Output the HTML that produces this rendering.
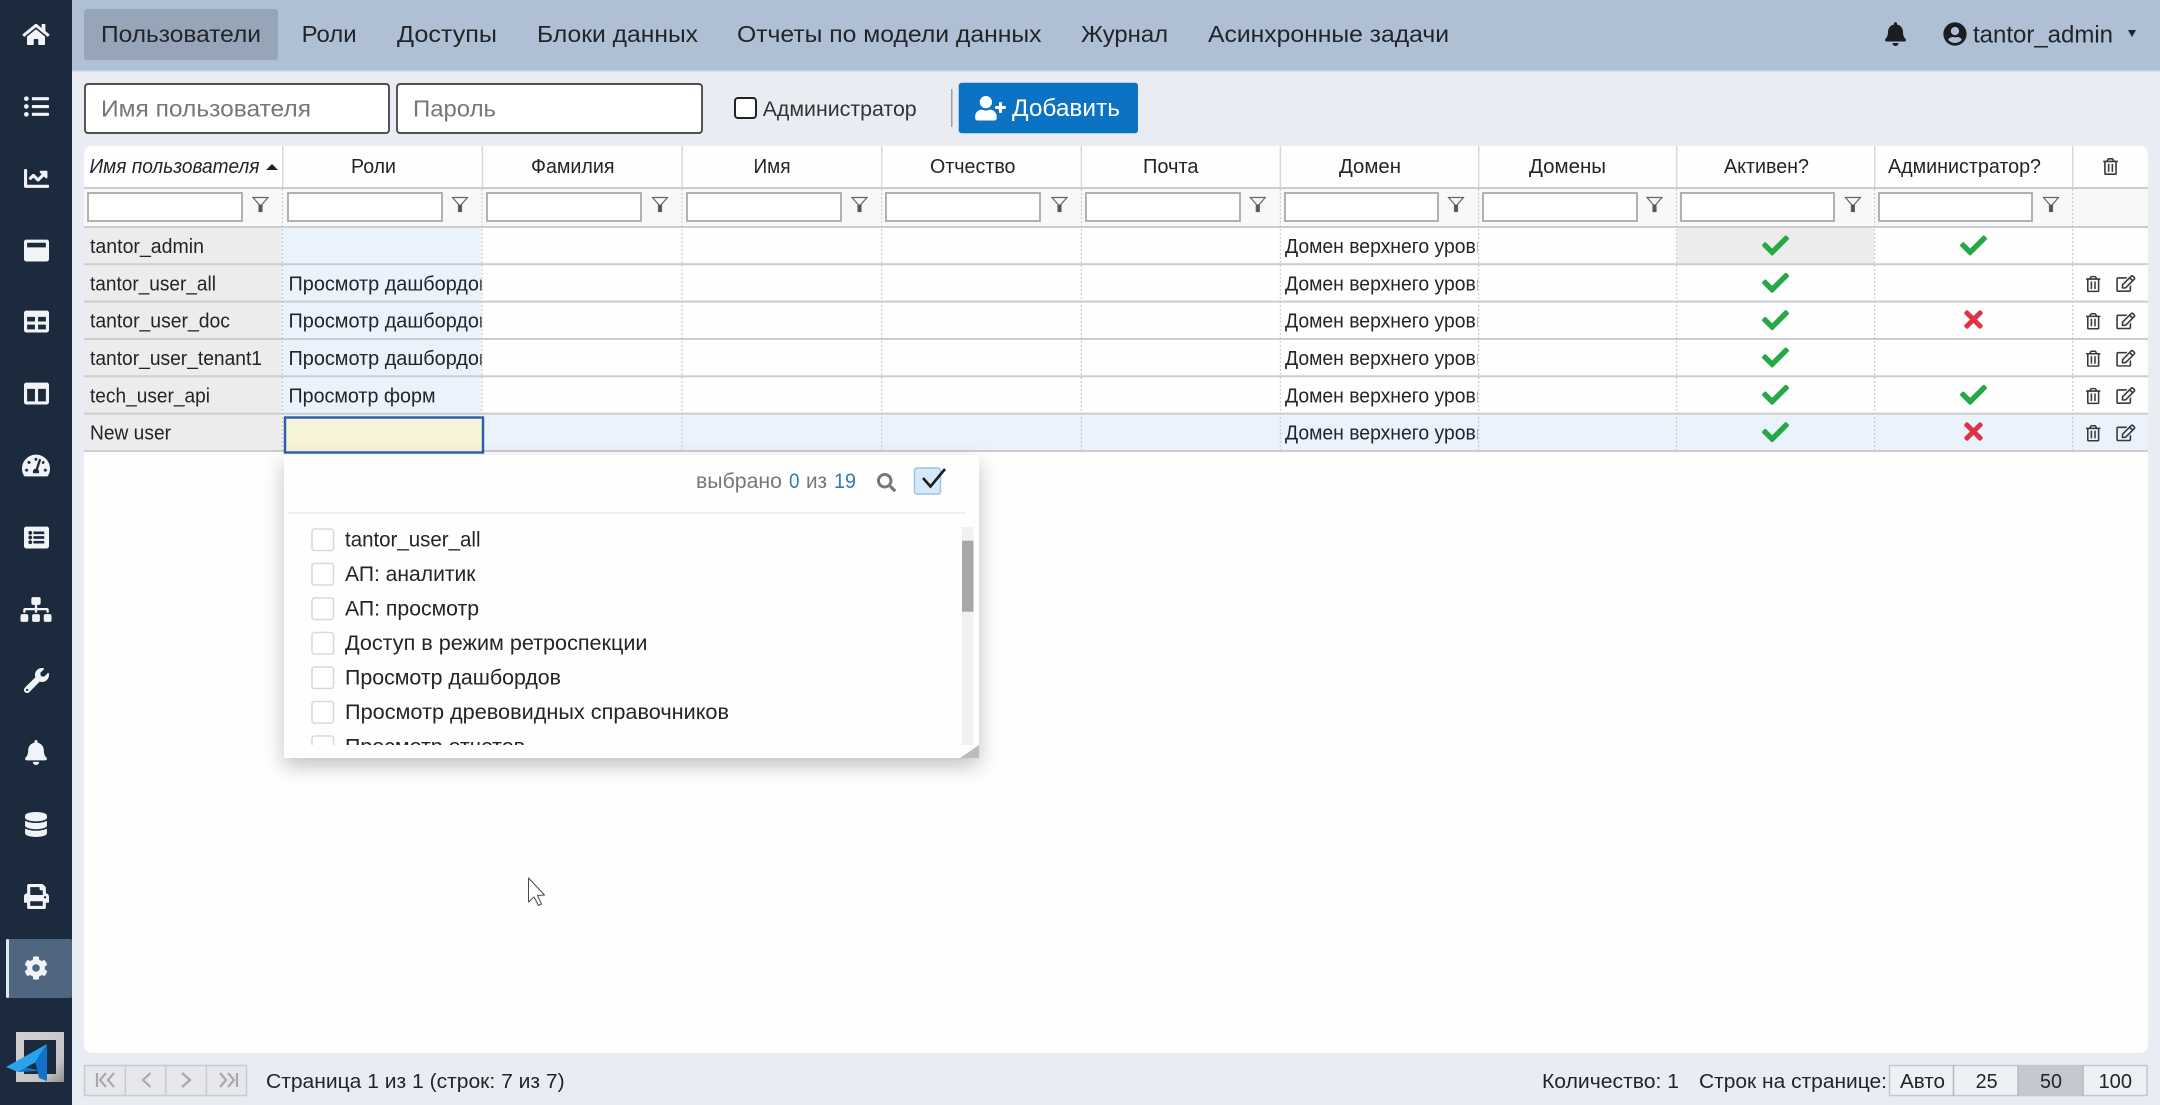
<!DOCTYPE html>
<html lang="ru">
<head>
<meta charset="utf-8">
<title>Пользователи</title>
<style>
html,body{margin:0;padding:0;width:2160px;height:1105px;overflow:hidden;background:#e9edf3}
svg{display:block;font-family:"Liberation Sans","Noto Sans CJK SC",sans-serif;filter:blur(.35px)}
text{fill:#212529;font-size:20px}
.nav{font-size:23.5px}
.ph{font-size:23px;fill:#777}
.dd text{font-size:21px}
.grey{fill:#777}
.blue{fill:#337ab7}
</style>
</head>
<body>
<svg width="2160" height="1105" viewBox="0 0 2160 1105" xmlns="http://www.w3.org/2000/svg">
<defs>
<symbol id="i-home" viewBox="0 0 576 512"><path d="M280.37 148.26L96 300.11V464a16 16 0 0 0 16 16l112.06-.29a16 16 0 0 0 15.92-16V368a16 16 0 0 1 16-16h64a16 16 0 0 1 16 16v95.64a16 16 0 0 0 16 16.05L464 480a16 16 0 0 0 16-16V300L295.67 148.26a12.19 12.19 0 0 0-15.3 0zM571.6 251.47L488 182.56V44.05a12 12 0 0 0-12-12h-56a12 12 0 0 0-12 12v72.61L318.47 43a48 48 0 0 0-61 0L4.34 251.47a12 12 0 0 0-1.6 16.9l25.5 31A12 12 0 0 0 45.15 301l235.22-193.74a12.19 12.19 0 0 1 15.3 0L530.9 301a12 12 0 0 0 16.9-1.6l25.5-31a12 12 0 0 0-1.7-16.93z"/></symbol>
<symbol id="i-list" viewBox="0 0 512 512"><path d="M48 48a48 48 0 1 0 48 48 48 48 0 0 0-48-48zm0 160a48 48 0 1 0 48 48 48 48 0 0 0-48-48zm0 160a48 48 0 1 0 48 48 48 48 0 0 0-48-48zm448 16H176a16 16 0 0 0-16 16v32a16 16 0 0 0 16 16h320a16 16 0 0 0 16-16v-32a16 16 0 0 0-16-16zm0-320H176a16 16 0 0 0-16 16v32a16 16 0 0 0 16 16h320a16 16 0 0 0 16-16V80a16 16 0 0 0-16-16zm0 160H176a16 16 0 0 0-16 16v32a16 16 0 0 0 16 16h320a16 16 0 0 0 16-16v-32a16 16 0 0 0-16-16z"/></symbol>
<symbol id="i-chart" viewBox="0 0 512 512"><path d="M496 384H64V80c0-8.84-7.16-16-16-16H16C7.16 64 0 71.16 0 80v336c0 17.67 14.33 32 32 32h464c8.84 0 16-7.16 16-16v-32c0-8.84-7.16-16-16-16zM464 96H345.94c-21.38 0-32.09 25.85-16.97 40.97l32.4 32.4L288 242.75l-73.37-73.37c-12.5-12.5-32.76-12.5-45.25 0l-68.69 68.69c-6.25 6.25-6.25 16.38 0 22.63l22.62 22.62c6.25 6.25 16.38 6.25 22.63 0L192 237.25l73.37 73.37c12.5 12.5 32.76 12.5 45.25 0l96-96 32.4 32.4c15.12 15.12 40.97 4.41 40.97-16.97V112c.01-8.84-7.15-16-16.02-16z"/></symbol>
<symbol id="i-win" viewBox="0 0 512 512"><path d="M464 32H48C21.5 32 0 53.5 0 80v352c0 26.5 21.5 48 48 48h416c26.5 0 48-21.5 48-48V80c0-26.5-21.5-48-48-48zm-16 160H64v-84c0-6.6 5.4-12 12-12h360c6.6 0 12 5.4 12 12v84z"/></symbol>
<symbol id="i-table" viewBox="0 0 512 512"><path d="M464 32H48C21.49 32 0 53.49 0 80v352c0 26.51 21.49 48 48 48h416c26.51 0 48-21.49 48-48V80c0-26.51-21.49-48-48-48zM224 416H64v-96h160v96zm0-160H64v-96h160v96zm224 160H288v-96h160v96zm0-160H288v-96h160v96z"/></symbol>
<symbol id="i-cols" viewBox="0 0 512 512"><path d="M464 32H48C21.49 32 0 53.49 0 80v352c0 26.51 21.49 48 48 48h416c26.51 0 48-21.49 48-48V80c0-26.51-21.49-48-48-48zM224 416H64V160h160v256zm224 0H288V160h160v256z"/></symbol>
<symbol id="i-gauge" viewBox="0 0 576 512"><path d="M288 32C128.94 32 0 160.94 0 320c0 52.8 14.25 102.26 39.06 144.8 5.61 9.62 16.3 15.2 27.44 15.2h443c11.14 0 21.83-5.58 27.44-15.2C561.75 422.26 576 372.8 576 320c0-159.06-128.94-288-288-288zm0 64c14.71 0 26.58 10.13 30.32 23.65-1.11 2.26-2.64 4.23-3.45 6.67l-9.22 27.67c-5.13 3.49-10.97 6.01-17.64 6.01-17.67 0-32-14.33-32-32S270.33 96 288 96zM96 384c-17.67 0-32-14.33-32-32s14.33-32 32-32 32 14.33 32 32-14.33 32-32 32zm48-160c-17.67 0-32-14.33-32-32s14.33-32 32-32 32 14.33 32 32-14.33 32-32 32zm246.77-72.41l-61.33 184C343.13 347.33 352 364.54 352 384c0 11.72-3.38 22.55-8.88 32H232.88c-5.5-9.45-8.88-20.28-8.88-32 0-33.94 26.5-61.43 59.9-63.59l61.34-184.01c4.17-12.56 17.73-19.45 30.36-15.17 12.57 4.19 19.35 17.79 15.17 30.36zm14.66 57.2l15.52-46.55c3.47-1.29 7.13-2.23 11.05-2.23 17.67 0 32 14.33 32 32s-14.33 32-32 32c-11.38-.01-20.89-6.28-26.57-15.22zM480 384c-17.67 0-32-14.33-32-32s14.33-32 32-32 32 14.33 32 32-14.33 32-32 32z"/></symbol>
<symbol id="i-listalt" viewBox="0 0 512 512"><path d="M464 480H48c-26.51 0-48-21.49-48-48V80c0-26.51 21.49-48 48-48h416c26.51 0 48 21.49 48 48v352c0 26.51-21.49 48-48 48zM128 120c-22.091 0-40 17.909-40 40s17.909 40 40 40 40-17.909 40-40-17.909-40-40-40zm0 96c-22.091 0-40 17.909-40 40s17.909 40 40 40 40-17.909 40-40-17.909-40-40-40zm0 96c-22.091 0-40 17.909-40 40s17.909 40 40 40 40-17.909 40-40-17.909-40-40-40zm288-136v-32c0-6.627-5.373-12-12-12H204c-6.627 0-12 5.373-12 12v32c0 6.627 5.373 12 12 12h200c6.627 0 12-5.373 12-12zm0 96v-32c0-6.627-5.373-12-12-12H204c-6.627 0-12 5.373-12 12v32c0 6.627 5.373 12 12 12h200c6.627 0 12-5.373 12-12zm0 96v-32c0-6.627-5.373-12-12-12H204c-6.627 0-12 5.373-12 12v32c0 6.627 5.373 12 12 12h200c6.627 0 12-5.373 12-12z"/></symbol>
<symbol id="i-site" viewBox="0 0 640 512"><path d="M128 352H32c-17.67 0-32 14.33-32 32v96c0 17.67 14.33 32 32 32h96c17.67 0 32-14.33 32-32v-96c0-17.67-14.33-32-32-32zm-24-80h192v48h48v-48h192v48h48v-57.59c0-21.17-17.23-38.41-38.41-38.41H344v-64h40c17.67 0 32-14.33 32-32V32c0-17.67-14.33-32-32-32H256c-17.67 0-32 14.33-32 32v96c0 17.67 14.33 32 32 32h40v64H94.41C73.23 224 56 241.23 56 262.41V320h48v-48zm264 80h-96c-17.67 0-32 14.33-32 32v96c0 17.67 14.33 32 32 32h96c17.67 0 32-14.33 32-32v-96c0-17.67-14.33-32-32-32zm240 0h-96c-17.67 0-32 14.33-32 32v96c0 17.67 14.33 32 32 32h96c17.67 0 32-14.33 32-32v-96c0-17.67-14.33-32-32-32z"/></symbol>
<symbol id="i-wrench" viewBox="0 0 512 512"><path d="M507.73 109.1c-2.24-9.03-13.54-12.09-20.12-5.51l-74.36 74.36-67.88-11.31-11.31-67.88 74.36-74.36c6.62-6.62 3.43-17.9-5.66-20.16-47.38-11.74-99.55.91-136.58 37.93-39.64 39.64-50.55 97.1-34.05 147.2L18.74 402.76c-24.99 24.99-24.99 65.51 0 90.5 24.99 24.99 65.51 24.99 90.5 0l213.21-213.21c50.12 16.71 107.47 5.68 147.37-34.22 37.07-37.07 49.7-89.32 37.91-136.73zM64 472c-13.25 0-24-10.75-24-24 0-13.26 10.75-24 24-24s24 10.74 24 24c0 13.25-10.75 24-24 24z"/></symbol>
<symbol id="i-bell" viewBox="0 0 448 512"><path d="M224 512c35.32 0 63.97-28.65 63.97-64H160.03c0 35.35 28.65 64 63.97 64zm215.39-149.71c-19.32-20.76-55.47-51.99-55.47-154.29 0-77.7-54.48-139.9-127.94-155.16V32c0-17.67-14.32-32-31.98-32s-31.98 14.33-31.98 32v20.84C118.56 68.1 64.08 130.3 64.08 208c0 102.3-36.15 133.53-55.47 154.29-6 6.45-8.66 14.16-8.61 21.71.11 16.4 12.98 32 32.1 32h383.8c19.12 0 32-15.6 32.1-32 .05-7.55-2.61-15.27-8.61-21.71z"/></symbol>
<symbol id="i-db" viewBox="0 0 448 512"><path d="M448 73.143v45.714C448 159.143 347.667 192 224 192S0 159.143 0 118.857V73.143C0 32.857 100.333 0 224 0s224 32.857 224 73.143zM448 176v102.857C448 319.143 347.667 352 224 352S0 319.143 0 278.857V176c48.125 33.143 136.208 48.572 224 48.572S399.874 209.143 448 176zm0 160v102.857C448 479.143 347.667 512 224 512S0 479.143 0 438.857V336c48.125 33.143 136.208 48.572 224 48.572S399.874 369.143 448 336z"/></symbol>
<symbol id="i-print" viewBox="0 0 512 512"><path d="M448 192V77.25c0-8.49-3.37-16.62-9.37-22.63L393.37 9.37c-6-6-14.14-9.37-22.63-9.37H96C78.33 0 64 14.33 64 32v160c-35.35 0-64 28.65-64 64v112c0 8.84 7.16 16 16 16h48v96c0 17.67 14.33 32 32 32h320c17.67 0 32-14.33 32-32v-96h48c8.84 0 16-7.16 16-16V256c0-35.35-28.65-64-64-64zm-64 256H128v-96h256v96zm0-224H128V64h192v48c0 8.84 7.16 16 16 16h48v96zm48 72c-13.25 0-24-10.75-24-24 0-13.26 10.75-24 24-24s24 10.74 24 24c0 13.25-10.75 24-24 24z"/></symbol>
<symbol id="i-cog" viewBox="0 0 512 512"><path d="M487.4 315.7l-42.6-24.6c4.3-23.2 4.3-47 0-70.2l42.6-24.6c4.9-2.8 7.1-8.6 5.5-14-11.1-35.6-30-67.8-54.7-94.6-3.8-4.1-10-5.1-14.8-2.3L380.8 110c-17.9-15.4-38.5-27.3-60.8-35.1V25.8c0-5.6-3.9-10.5-9.4-11.7-36.7-8.2-74.3-7.8-109.2 0-5.5 1.2-9.4 6.1-9.4 11.7V75c-22.2 7.9-42.8 19.8-60.8 35.1L88.7 85.5c-4.9-2.8-11-1.9-14.8 2.3-24.7 26.7-43.6 58.9-54.7 94.6-1.7 5.4.6 11.2 5.5 14L67.3 221c-4.3 23.2-4.3 47 0 70.2l-42.6 24.6c-4.9 2.8-7.1 8.6-5.5 14 11.1 35.6 30 67.8 54.7 94.6 3.8 4.1 10 5.1 14.8 2.3l42.6-24.6c17.9 15.4 38.5 27.3 60.8 35.1v49.2c0 5.6 3.9 10.5 9.4 11.7 36.7 8.2 74.3 7.8 109.2 0 5.5-1.2 9.4-6.1 9.4-11.7v-49.2c22.2-7.9 42.8-19.8 60.8-35.1l42.6 24.6c4.9 2.8 11 1.9 14.8-2.3 24.7-26.7 43.6-58.9 54.7-94.6 1.5-5.5-.7-11.3-5.6-14.1zM256 336c-44.1 0-80-35.9-80-80s35.9-80 80-80 80 35.9 80 80-35.9 80-80 80z"/></symbol>
<symbol id="i-user" viewBox="0 0 496 512"><path d="M248 8C111 8 0 119 0 256s111 248 248 248 248-111 248-248S385 8 248 8zm0 96c48.6 0 88 39.4 88 88s-39.4 88-88 88-88-39.4-88-88 39.4-88 88-88zm0 344c-58.7 0-111.3-26.6-146.5-68.2 18.8-35.4 55.6-59.8 98.5-59.8 2.4 0 4.8.4 7.1 1.1 13 4.2 26.6 6.9 40.9 6.9 14.3 0 28-2.7 40.9-6.9 2.3-.7 4.7-1.1 7.1-1.1 42.9 0 79.7 24.4 98.5 59.8C359.3 421.4 306.7 448 248 448z"/></symbol>
<symbol id="i-plus" viewBox="0 0 640 512"><path d="M624 208h-64v-64c0-8.8-7.2-16-16-16h-32c-8.8 0-16 7.2-16 16v64h-64c-8.8 0-16 7.2-16 16v32c0 8.8 7.2 16 16 16h64v64c0 8.8 7.2 16 16 16h32c8.8 0 16-7.2 16-16v-64h64c8.8 0 16-7.2 16-16v-32c0-8.8-7.2-16-16-16zm-400 48c70.7 0 128-57.3 128-128S294.7 0 224 0 96 57.3 96 128s57.3 128 128 128zm89.6 32h-16.7c-22.2 10.2-46.9 16-72.9 16s-50.6-5.8-72.9-16h-16.7C60.2 288 0 348.2 0 422.4V464c0 26.5 21.5 48 48 48h352c26.5 0 48-21.5 48-48v-41.6c0-74.2-60.2-134.4-134.4-134.4z"/></symbol>
<symbol id="i-check" viewBox="0 0 512 512"><path d="M173.898 439.404l-166.4-166.4c-9.997-9.997-9.997-26.206 0-36.204l36.203-36.204c9.997-9.998 26.207-9.998 36.204 0L192 312.69 432.095 72.596c9.997-9.997 26.207-9.997 36.204 0l36.203 36.204c9.997 9.997 9.997 26.206 0 36.204l-294.4 294.401c-9.998 9.997-26.207 9.997-36.204-.001z"/></symbol>
<symbol id="i-x" viewBox="0 0 352 512"><path d="M242.72 256l100.07-100.07c12.28-12.28 12.28-32.19 0-44.48l-22.24-22.24c-12.28-12.28-32.19-12.28-44.48 0L176 189.28 75.93 89.21c-12.28-12.28-32.19-12.28-44.48 0L9.21 111.45c-12.28 12.28-12.28 32.19 0 44.48L109.28 256 9.21 356.07c-12.28 12.28-12.28 32.19 0 44.48l22.24 22.24c12.28 12.28 32.2 12.28 44.48 0L176 322.72l100.07 100.07c12.28 12.28 32.2 12.28 44.48 0l22.24-22.24c12.28-12.28 12.28-32.19 0-44.48L242.72 256z"/></symbol>
<symbol id="i-search" viewBox="0 0 512 512"><path d="M505 442.7L405.3 343c-4.5-4.5-10.6-7-17-7H372c27.6-35.3 44-79.7 44-128C416 93.1 322.9 0 208 0S0 93.1 0 208s93.1 208 208 208c48.3 0 92.7-16.4 128-44v16.3c0 6.4 2.5 12.5 7 17l99.7 99.7c9.4 9.4 24.6 9.4 33.9 0l28.3-28.3c9.4-9.4 9.4-24.6.1-34zM208 336c-70.7 0-128-57.2-128-128 0-70.7 57.2-128 128-128 70.7 0 128 57.2 128 128 0 70.7-57.2 128-128 128z"/></symbol>
<symbol id="i-trash" viewBox="0 0 448 512"><path d="M268 416h24a12 12 0 0 0 12-12V188a12 12 0 0 0-12-12h-24a12 12 0 0 0-12 12v216a12 12 0 0 0 12 12zM432 80h-82.41l-34-56.7A48 48 0 0 0 274.41 0H173.59a48 48 0 0 0-41.16 23.3L98.41 80H16A16 16 0 0 0 0 96v16a16 16 0 0 0 16 16h16v336a48 48 0 0 0 48 48h288a48 48 0 0 0 48-48V128h16a16 16 0 0 0 16-16V96a16 16 0 0 0-16-16zM171.84 50.91A6 6 0 0 1 177 48h94a6 6 0 0 1 5.15 2.91L293.61 80H154.39zM368 464H80V128h288zm-212-48h24a12 12 0 0 0 12-12V188a12 12 0 0 0-12-12h-24a12 12 0 0 0-12 12v216a12 12 0 0 0 12 12z"/></symbol>
<symbol id="i-edit" viewBox="0 0 576 512"><path d="M402.3 344.9l32-32c5-5 13.7-1.5 13.7 5.7V464c0 26.5-21.5 48-48 48H48c-26.5 0-48-21.5-48-48V112c0-26.5 21.5-48 48-48h273.5c7.1 0 10.7 8.6 5.7 13.7l-32 32c-1.5 1.5-3.5 2.3-5.7 2.3H48v352h352V350.5c0-2.1.8-4.1 2.3-5.6zm156.6-201.8L296.3 405.7l-90.4 10c-26.2 2.9-48.5-19.2-45.6-45.6l10-90.4L432.9 17.1c22.9-22.9 59.9-22.9 82.7 0l43.2 43.2c22.9 22.9 22.9 60 .1 82.8zM460.1 174L402 115.9 216.2 301.8l-7.3 65.3 65.3-7.3L460.1 174zm64.8-79.7l-43.2-43.2c-4.1-4.1-10.8-4.1-14.8 0L436 82l58.1 58.1 30.9-30.9c4-4.2 4-10.8-.1-14.9z"/></symbol>
<symbol id="i-funnel" viewBox="0 0 17 16"><path d="M1 1H16L10 7.8V15H7V7.8Z" fill="none" stroke="#666" stroke-width="1.2"/><path d="M7.3 8h2.4v7H7.3z" fill="#555"/></symbol>
<clipPath id="clipRoles"><rect x="284" y="227" width="197.5" height="190"/></clipPath>
<clipPath id="clipDomain"><rect x="1282" y="227" width="195.5" height="225"/></clipPath>
<clipPath id="clipList"><rect x="288" y="520" width="672" height="225"/></clipPath>
<filter id="sh" x="-10%" y="-10%" width="120%" height="130%"><feDropShadow dx="0" dy="8" stdDeviation="10" flood-color="#000" flood-opacity=".24"/></filter>
<linearGradient id="logoGrey" x1="0" y1="0" x2="1" y2="1"><stop offset="0" stop-color="#d2d2d2"/><stop offset=".75" stop-color="#c4c4c4"/><stop offset="1" stop-color="#8d8d8d"/></linearGradient>
</defs>

<!-- page bg -->
<rect width="2160" height="1105" fill="#e9edf3"/>

<!-- top bar -->
<rect x="72" y="0" width="2088" height="70" fill="#afbfd4"/>
<rect x="72" y="70" width="2088" height="1.5" fill="#c3cfdf"/>
<rect x="84" y="9" width="194" height="51" rx="3" fill="#96a5b8"/>
<text class="nav" x="101" y="42" textLength="160" lengthAdjust="spacingAndGlyphs">Пользователи</text>
<text class="nav" x="301.6" y="42" textLength="55" lengthAdjust="spacingAndGlyphs">Роли</text>
<text class="nav" x="397" y="42" textLength="100" lengthAdjust="spacingAndGlyphs">Доступы</text>
<text class="nav" x="537" y="42" textLength="161" lengthAdjust="spacingAndGlyphs">Блоки данных</text>
<text class="nav" x="737" y="42" textLength="304.5" lengthAdjust="spacingAndGlyphs">Отчеты по модели данных</text>
<text class="nav" x="1081" y="42" textLength="87" lengthAdjust="spacingAndGlyphs">Журнал</text>
<text class="nav" x="1208" y="42" textLength="241" lengthAdjust="spacingAndGlyphs">Асинхронные задачи</text>
<use href="#i-bell" x="1885" y="22" width="21" height="24" fill="#1a1d21"/>
<use href="#i-user" x="1943" y="22" width="24" height="24" fill="#1a1d21"/>
<text class="nav" x="1973" y="42.5" textLength="140" lengthAdjust="spacingAndGlyphs" style="font-size:24px">tantor_admin</text>
<path d="M2128 30h8l-4 7z" fill="#212529"/>

<!-- sidebar -->
<rect x="0" y="0" width="72" height="1105" fill="#1c2a3e"/>
<rect x="6" y="939" width="66" height="59" rx="2" fill="#4f6580"/>
<rect x="6" y="939" width="3" height="59" rx="1.5" fill="#e2e8ef"/>
<g fill="#f0f3f7">
<use href="#i-home" x="22.5" y="22.5" width="27" height="24"/>
<use href="#i-list" x="24" y="94" width="25" height="25"/>
<use href="#i-chart" x="24" y="166" width="25" height="25"/>
<use href="#i-win" x="24" y="238" width="25" height="25"/>
<use href="#i-table" x="24" y="309" width="25" height="25"/>
<use href="#i-cols" x="24" y="381" width="25" height="25"/>
<use href="#i-gauge" x="22" y="453" width="28" height="25"/>
<use href="#i-listalt" x="24" y="525" width="25" height="25"/>
<use href="#i-site" x="20.5" y="597" width="31" height="25"/>
<use href="#i-wrench" x="24" y="668" width="25" height="25"/>
<use href="#i-bell" x="25" y="740" width="22" height="25"/>
<use href="#i-db" x="25" y="812" width="22" height="25"/>
<use href="#i-print" x="24" y="884" width="25" height="25"/>
<use href="#i-cog" x="24" y="956" width="24" height="24"/>
</g>
<!-- logo -->
<path fill-rule="evenodd" d="M16 1032H64V1082H16ZM24 1040V1074H56V1040Z" fill="url(#logoGrey)"/>
<path d="M6 1067L47 1044L39 1056L37 1070L27 1071L18 1072Z" fill="#29a3ea"/>
<path d="M47 1044V1081L39 1078L37.5 1071L18 1072L26 1067.5L35 1062.5L39 1056Z" fill="#1173c9"/>
<path d="M26 1067.5L35 1062.5L37.5 1070Z" fill="#1c2a3e"/>

<!-- toolbar -->
<rect x="85" y="84" width="304" height="49" rx="3" fill="#fff" stroke="#3a3a3a" stroke-width="1.7"/>
<rect x="397" y="84" width="305" height="49" rx="3" fill="#fff" stroke="#3a3a3a" stroke-width="1.7"/>
<text class="ph" x="101" y="116.5" textLength="210" lengthAdjust="spacingAndGlyphs">Имя пользователя</text>
<text class="ph" x="413" y="116.5" textLength="83" lengthAdjust="spacingAndGlyphs">Пароль</text>
<rect x="735" y="98" width="21" height="20" rx="3" fill="#fff" stroke="#222" stroke-width="2"/>
<text x="762.7" y="116" textLength="154" lengthAdjust="spacingAndGlyphs" style="font-size:21.5px;fill:#333">Администратор</text>
<rect x="951" y="89" width="1.5" height="38" fill="#9aa0a6"/>
<rect x="958.7" y="82.7" width="179.3" height="50.6" rx="3" fill="#0b72c4"/>
<use href="#i-plus" x="975" y="96" width="31" height="24.5" fill="#fff"/>
<text x="1012" y="116" textLength="108" lengthAdjust="spacingAndGlyphs" style="font-size:24px;fill:#fff">Добавить</text>

<!-- table -->
<rect x="84" y="146" width="2064" height="907" rx="8" fill="#fefefe"/>
<rect x="84" y="188" width="2064" height="39" fill="#f8f8f8"/>
<!-- cell backgrounds -->
<rect x="84" y="227" width="198" height="224" fill="#ececec"/>
<rect x="283" y="227" width="198" height="187" fill="#eaf2fb"/>
<rect x="1677" y="227" width="197" height="37" fill="#ececec"/>
<rect x="283" y="414" width="1865" height="37" fill="#eaf2fb"/>

<!-- horizontal lines -->
<g fill="#cbcdcf">
<rect x="84" y="187" width="2064" height="2"/>
<rect x="84" y="226" width="2064" height="2"/>
<rect x="84" y="263.2" width="2064" height="2"/>
<rect x="84" y="300.6" width="2064" height="2"/>
<rect x="84" y="338" width="2064" height="2"/>
<rect x="84" y="375.3" width="2064" height="2"/>
<rect x="84" y="412.7" width="2064" height="2"/>
<rect x="84" y="450" width="2064" height="2"/>
</g>
<!-- header col separators -->
<g fill="#d9d9d9">
<rect x="282" y="146" width="1.5" height="41"/><rect x="481.6" y="146" width="1.5" height="41"/><rect x="681.4" y="146" width="1.5" height="41"/><rect x="881" y="146" width="1.5" height="41"/><rect x="1080.6" y="146" width="1.5" height="41"/><rect x="1279.6" y="146" width="1.5" height="41"/><rect x="1478" y="146" width="1.5" height="41"/><rect x="1676" y="146" width="1.5" height="41"/><rect x="1874" y="146" width="1.5" height="41"/><rect x="2072" y="146" width="1.5" height="41"/>
</g>
<!-- dotted col separators -->
<path d="M282.5 189V451M482 189V451M682 189V451M881.7 189V451M1081.3 189V451M1280.3 189V451M1478.7 189V451M1676.7 189V451M1874.7 189V451M2072.7 189V451" stroke="#c4c4c4" stroke-width="1" stroke-dasharray="2 2" fill="none"/>

<!-- header text -->
<text x="89.5" y="173" textLength="170" lengthAdjust="spacingAndGlyphs" font-style="italic">Имя пользователя</text>
<path d="M266 170L272 164L278 170Z" fill="#212529"/>
<text x="351" y="173" textLength="45" lengthAdjust="spacingAndGlyphs">Роли</text>
<text x="531" y="173" textLength="83.5" lengthAdjust="spacingAndGlyphs">Фамилия</text>
<text x="753.5" y="173" textLength="37" lengthAdjust="spacingAndGlyphs">Имя</text>
<text x="930" y="173" textLength="85.5" lengthAdjust="spacingAndGlyphs">Отчество</text>
<text x="1143" y="173" textLength="55.5" lengthAdjust="spacingAndGlyphs">Почта</text>
<text x="1339" y="173" textLength="62" lengthAdjust="spacingAndGlyphs">Домен</text>
<text x="1529" y="173" textLength="77" lengthAdjust="spacingAndGlyphs">Домены</text>
<text x="1724" y="173" textLength="85" lengthAdjust="spacingAndGlyphs">Активен?</text>
<text x="1888" y="173" textLength="153" lengthAdjust="spacingAndGlyphs">Администратор?</text>
<use href="#i-trash" x="2103" y="158" width="15" height="17" fill="#3a3a3a"/>

<!-- filters -->
<g fill="#fff" stroke="#a9a9a9" stroke-width="1.8">
<rect x="88" y="193" width="154" height="28"/><rect x="288" y="193" width="154" height="28"/><rect x="487" y="193" width="154" height="28"/><rect x="687" y="193" width="154" height="28"/><rect x="886" y="193" width="154" height="28"/><rect x="1086" y="193" width="154" height="28"/><rect x="1285" y="193" width="153" height="28"/><rect x="1483" y="193" width="154" height="28"/><rect x="1681" y="193" width="153" height="28"/><rect x="1879" y="193" width="153" height="28"/>
</g>
<use href="#i-funnel" x="252" y="196.5" width="17" height="16"/>
<use href="#i-funnel" x="451.5" y="196.5" width="17" height="16"/>
<use href="#i-funnel" x="651.5" y="196.5" width="17" height="16"/>
<use href="#i-funnel" x="851" y="196.5" width="17" height="16"/>
<use href="#i-funnel" x="1051" y="196.5" width="17" height="16"/>
<use href="#i-funnel" x="1249.3" y="196.5" width="17" height="16"/>
<use href="#i-funnel" x="1447.5" y="196.5" width="17" height="16"/>
<use href="#i-funnel" x="1646" y="196.5" width="17" height="16"/>
<use href="#i-funnel" x="1844.4" y="196.5" width="17" height="16"/>
<use href="#i-funnel" x="2042.5" y="196.5" width="17" height="16"/>

<!-- col 1 -->
<text x="90" y="253" textLength="114" lengthAdjust="spacingAndGlyphs">tantor_admin</text>
<text x="90" y="290.3" textLength="126" lengthAdjust="spacingAndGlyphs">tantor_user_all</text>
<text x="90" y="327.7" textLength="140" lengthAdjust="spacingAndGlyphs">tantor_user_doc</text>
<text x="90" y="365" textLength="172" lengthAdjust="spacingAndGlyphs">tantor_user_tenant1</text>
<text x="90" y="402.3" textLength="120" lengthAdjust="spacingAndGlyphs">tech_user_api</text>
<text x="90" y="439.7" textLength="81" lengthAdjust="spacingAndGlyphs">New user</text>
<!-- roles -->
<g clip-path="url(#clipRoles)">
<text x="288.5" y="290.3" textLength="201" lengthAdjust="spacingAndGlyphs">Просмотр дашбордов</text>
<text x="288.5" y="327.7" textLength="201" lengthAdjust="spacingAndGlyphs">Просмотр дашбордов</text>
<text x="288.5" y="365" textLength="201" lengthAdjust="spacingAndGlyphs">Просмотр дашбордов</text>
<text x="288.5" y="402.3" textLength="147" lengthAdjust="spacingAndGlyphs">Просмотр форм</text>
</g>
<!-- domain -->
<g clip-path="url(#clipDomain)">
<text x="1285" y="253" textLength="212" lengthAdjust="spacingAndGlyphs">Домен верхнего уровня</text>
<text x="1285" y="290.3" textLength="212" lengthAdjust="spacingAndGlyphs">Домен верхнего уровня</text>
<text x="1285" y="327.7" textLength="212" lengthAdjust="spacingAndGlyphs">Домен верхнего уровня</text>
<text x="1285" y="365" textLength="212" lengthAdjust="spacingAndGlyphs">Домен верхнего уровня</text>
<text x="1285" y="402.3" textLength="212" lengthAdjust="spacingAndGlyphs">Домен верхнего уровня</text>
<text x="1285" y="439.7" textLength="212" lengthAdjust="spacingAndGlyphs">Домен верхнего уровня</text>
</g>
<!-- checks -->
<g fill="#28a745">
<use href="#i-check" x="1762" y="232" width="27" height="27"/>
<use href="#i-check" x="1762" y="269.3" width="27" height="27"/>
<use href="#i-check" x="1762" y="306.7" width="27" height="27"/>
<use href="#i-check" x="1762" y="344" width="27" height="27"/>
<use href="#i-check" x="1762" y="381.3" width="27" height="27"/>
<use href="#i-check" x="1762" y="418.7" width="27" height="27"/>
<use href="#i-check" x="1960" y="232" width="27" height="27"/>
<use href="#i-check" x="1960" y="381.3" width="27" height="27"/>
</g>
<g fill="#dc3545">
<use href="#i-x" x="1962" y="306" width="23" height="27"/>
<use href="#i-x" x="1962" y="418" width="23" height="27"/>
</g>
<!-- actions -->
<g fill="#3a3a3a">
<use href="#i-trash" x="2085.7" y="275.7" width="15" height="16.5"/><use href="#i-edit" x="2116" y="275" width="19.7" height="17"/>
<use href="#i-trash" x="2085.7" y="313" width="15" height="16.5"/><use href="#i-edit" x="2116" y="312.4" width="19.7" height="17"/>
<use href="#i-trash" x="2085.7" y="350.4" width="15" height="16.5"/><use href="#i-edit" x="2116" y="349.8" width="19.7" height="17"/>
<use href="#i-trash" x="2085.7" y="387.7" width="15" height="16.5"/><use href="#i-edit" x="2116" y="387" width="19.7" height="17"/>
<use href="#i-trash" x="2085.7" y="425" width="15" height="16.5"/><use href="#i-edit" x="2116" y="424.4" width="19.7" height="17"/>
</g>
<!-- editor cell -->
<rect x="285" y="417.5" width="198" height="35" fill="#f6f3d9" stroke="#2a5ea8" stroke-width="2.4"/>

<!-- dropdown -->
<rect x="284" y="455" width="695" height="303" fill="#fefefe" filter="url(#sh)"/>
<g class="dd">
<text class="grey" x="696" y="488" textLength="86" lengthAdjust="spacingAndGlyphs">выбрано</text>
<text class="blue" x="789" y="488" textLength="10.5" lengthAdjust="spacingAndGlyphs">0</text>
<text class="grey" x="806" y="488" textLength="21" lengthAdjust="spacingAndGlyphs">из</text>
<text class="blue" x="834" y="488" textLength="22" lengthAdjust="spacingAndGlyphs">19</text>
<use href="#i-search" x="877" y="473" width="19" height="19" fill="#777"/>
<rect x="914.5" y="468" width="26" height="26" rx="2.5" fill="#d6e9f8" stroke="#9cc4e4" stroke-width="1.5"/>
<path d="M923 478L930.5 486.5L945 469" fill="none" stroke="#1c1c1c" stroke-width="2.6"/>
<rect x="288" y="512" width="678" height="1.6" fill="#eee"/>
<rect x="962" y="527" width="11.5" height="218" fill="#f1f1f1"/>
<rect x="962" y="540.7" width="11.5" height="71" fill="#a8a8a8"/>
<path d="M979 745V758H960Z" fill="#bcbcbc"/>
<g clip-path="url(#clipList)">
<g fill="#fff" stroke="#d9d9d9" stroke-width="1.6">
<rect x="312" y="529" width="21.5" height="21.5" rx="2.5"/>
<rect x="312" y="563.5" width="21.5" height="21.5" rx="2.5"/>
<rect x="312" y="598" width="21.5" height="21.5" rx="2.5"/>
<rect x="312" y="632.5" width="21.5" height="21.5" rx="2.5"/>
<rect x="312" y="667" width="21.5" height="21.5" rx="2.5"/>
<rect x="312" y="701.5" width="21.5" height="21.5" rx="2.5"/>
<rect x="312" y="736" width="21.5" height="21.5" rx="2.5"/>
</g>
<text x="345" y="546.5" textLength="135.5" lengthAdjust="spacingAndGlyphs">tantor_user_all</text>
<text x="345" y="581" textLength="130.5" lengthAdjust="spacingAndGlyphs">АП: аналитик</text>
<text x="345" y="615.5" textLength="134" lengthAdjust="spacingAndGlyphs">АП: просмотр</text>
<text x="345" y="650" textLength="302.5" lengthAdjust="spacingAndGlyphs">Доступ в режим ретроспекции</text>
<text x="345" y="684.5" textLength="216" lengthAdjust="spacingAndGlyphs">Просмотр дашбордов</text>
<text x="345" y="719" textLength="384" lengthAdjust="spacingAndGlyphs">Просмотр древовидных справочников</text>
<text x="345" y="753.5" textLength="180" lengthAdjust="spacingAndGlyphs">Просмотр отчетов</text>
</g>
</g>

<!-- cursor -->
<path d="M528.5 878V902L534 897L538.5 905.5L541.5 904L537.5 895.5L544.5 895Z" fill="#fff" stroke="#4a4a4a" stroke-width="1" stroke-linejoin="round"/>

<!-- pager -->
<rect x="84.5" y="1065.5" width="162" height="30" fill="#e7e8eb" stroke="#c8ccd0" stroke-width="1.5"/>
<path d="M125.3 1065V1096M165.7 1065V1096M206.4 1065V1096" stroke="#c8ccd0" stroke-width="1.5"/>
<g fill="none" stroke="#a9a9a9" stroke-width="2.2">
<path d="M97 1073V1087M106 1073L100 1080L106 1087M114 1073L108 1080L114 1087"/>
<path d="M150.5 1073L143 1080L150.5 1087"/>
<path d="M182 1073L190 1080L182 1087"/>
<path d="M220 1073L226 1080L220 1087M228 1073L234 1080L228 1087M237 1073V1087"/>
</g>
<text x="266" y="1088" textLength="298.6" lengthAdjust="spacingAndGlyphs">Страница 1 из 1 (строк: 7 из 7)</text>
<text x="1542" y="1088" textLength="137" lengthAdjust="spacingAndGlyphs">Количество: 1</text>
<text x="1699" y="1088" textLength="188" lengthAdjust="spacingAndGlyphs">Строк на странице:</text>
<rect x="1889.5" y="1065.5" width="257.5" height="30" fill="#edf0f4" stroke="#c5c9ce" stroke-width="1.5"/>
<rect x="2018" y="1065.5" width="65" height="30" fill="#c5c8ce"/>
<path d="M1953.5 1065V1096M2018 1065V1096M2083 1065V1096" stroke="#b5b9be" stroke-width="1.5"/>
<text x="1900" y="1088" textLength="45" lengthAdjust="spacingAndGlyphs">Авто</text>
<text x="1975.6" y="1088" textLength="22" lengthAdjust="spacingAndGlyphs">25</text>
<text x="2040" y="1088" textLength="22" lengthAdjust="spacingAndGlyphs">50</text>
<text x="2098.5" y="1088" textLength="33.5" lengthAdjust="spacingAndGlyphs">100</text>
</svg>
</body>
</html>
